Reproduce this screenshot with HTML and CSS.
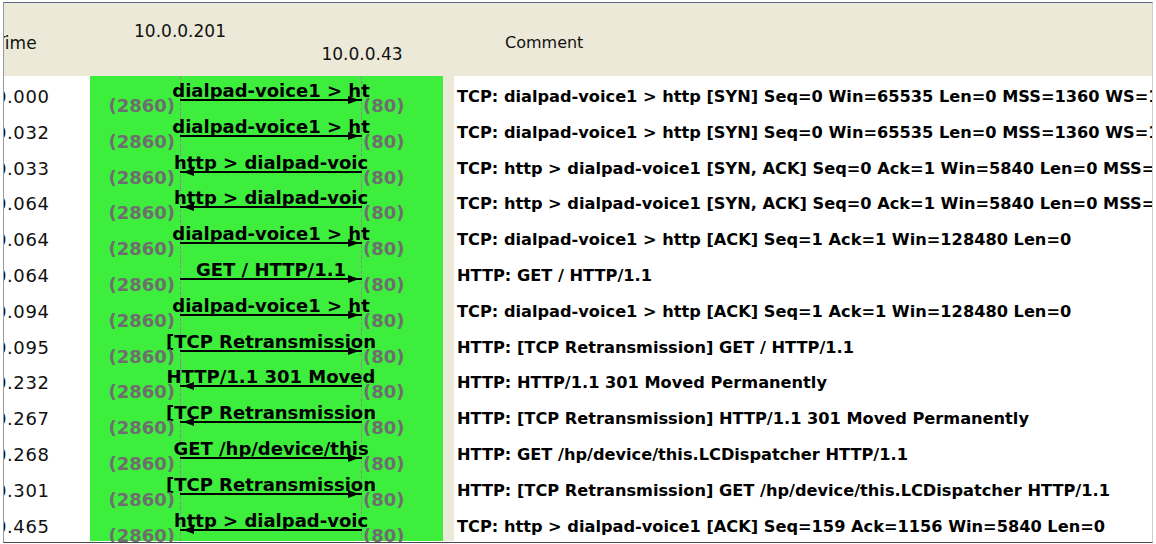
FILE: index.html
```html
<!DOCTYPE html>
<html>
<head>
<meta charset="utf-8">
<link rel="stylesheet" href="styles.css">
</head>
<body>
<div class="frame">
  <div class="header">
    <div class="h-time">Time</div>
    <div class="h-flow">
      <div class="node node-a">10.0.0.201</div>
      <div class="node node-b">10.0.0.43</div>
    </div>
    <div class="h-gap"></div>
    <div class="h-comment">Comment</div>
  </div>
  <div class="rows">
    <div class="row">
      <div class="time">0.000</div>
      <div class="flow"><div class="life"></div><div class="label">dialpad-voice1 &gt; ht</div><div class="arrow right"></div><div class="port src">(2860)</div><div class="port dst">(80)</div></div>
      <div class="gap"></div>
      <div class="comment">TCP: dialpad-voice1 &gt; http [SYN] Seq=0 Win=65535 Len=0 MSS=1360 WS=1</div>
    </div>
    <div class="row">
      <div class="time">0.032</div>
      <div class="flow"><div class="life"></div><div class="label">dialpad-voice1 &gt; ht</div><div class="arrow right"></div><div class="port src">(2860)</div><div class="port dst">(80)</div></div>
      <div class="gap"></div>
      <div class="comment">TCP: dialpad-voice1 &gt; http [SYN] Seq=0 Win=65535 Len=0 MSS=1360 WS=1</div>
    </div>
    <div class="row">
      <div class="time">0.033</div>
      <div class="flow"><div class="life"></div><div class="label">http &gt; dialpad-voic</div><div class="arrow left"></div><div class="port src">(2860)</div><div class="port dst">(80)</div></div>
      <div class="gap"></div>
      <div class="comment">TCP: http &gt; dialpad-voice1 [SYN, ACK] Seq=0 Ack=1 Win=5840 Len=0 MSS=1460</div>
    </div>
    <div class="row">
      <div class="time">0.064</div>
      <div class="flow"><div class="life"></div><div class="label">http &gt; dialpad-voic</div><div class="arrow left"></div><div class="port src">(2860)</div><div class="port dst">(80)</div></div>
      <div class="gap"></div>
      <div class="comment">TCP: http &gt; dialpad-voice1 [SYN, ACK] Seq=0 Ack=1 Win=5840 Len=0 MSS=1460</div>
    </div>
    <div class="row">
      <div class="time">0.064</div>
      <div class="flow"><div class="life"></div><div class="label">dialpad-voice1 &gt; ht</div><div class="arrow right"></div><div class="port src">(2860)</div><div class="port dst">(80)</div></div>
      <div class="gap"></div>
      <div class="comment">TCP: dialpad-voice1 &gt; http [ACK] Seq=1 Ack=1 Win=128480 Len=0</div>
    </div>
    <div class="row">
      <div class="time">0.064</div>
      <div class="flow"><div class="life"></div><div class="label">GET / HTTP/1.1</div><div class="arrow right"></div><div class="port src">(2860)</div><div class="port dst">(80)</div></div>
      <div class="gap"></div>
      <div class="comment">HTTP: GET / HTTP/1.1</div>
    </div>
    <div class="row">
      <div class="time">0.094</div>
      <div class="flow"><div class="life"></div><div class="label">dialpad-voice1 &gt; ht</div><div class="arrow right"></div><div class="port src">(2860)</div><div class="port dst">(80)</div></div>
      <div class="gap"></div>
      <div class="comment">TCP: dialpad-voice1 &gt; http [ACK] Seq=1 Ack=1 Win=128480 Len=0</div>
    </div>
    <div class="row">
      <div class="time">0.095</div>
      <div class="flow"><div class="life"></div><div class="label">[TCP Retransmission</div><div class="arrow right"></div><div class="port src">(2860)</div><div class="port dst">(80)</div></div>
      <div class="gap"></div>
      <div class="comment">HTTP: [TCP Retransmission] GET / HTTP/1.1</div>
    </div>
    <div class="row">
      <div class="time">0.232</div>
      <div class="flow"><div class="life"></div><div class="label">HTTP/1.1 301 Moved</div><div class="arrow left"></div><div class="port src">(2860)</div><div class="port dst">(80)</div></div>
      <div class="gap"></div>
      <div class="comment">HTTP: HTTP/1.1 301 Moved Permanently</div>
    </div>
    <div class="row">
      <div class="time">0.267</div>
      <div class="flow"><div class="life"></div><div class="label">[TCP Retransmission</div><div class="arrow left"></div><div class="port src">(2860)</div><div class="port dst">(80)</div></div>
      <div class="gap"></div>
      <div class="comment">HTTP: [TCP Retransmission] HTTP/1.1 301 Moved Permanently</div>
    </div>
    <div class="row">
      <div class="time">0.268</div>
      <div class="flow"><div class="life"></div><div class="label">GET /hp/device/this</div><div class="arrow right"></div><div class="port src">(2860)</div><div class="port dst">(80)</div></div>
      <div class="gap"></div>
      <div class="comment">HTTP: GET /hp/device/this.LCDispatcher HTTP/1.1</div>
    </div>
    <div class="row">
      <div class="time">0.301</div>
      <div class="flow"><div class="life"></div><div class="label">[TCP Retransmission</div><div class="arrow right"></div><div class="port src">(2860)</div><div class="port dst">(80)</div></div>
      <div class="gap"></div>
      <div class="comment">HTTP: [TCP Retransmission] GET /hp/device/this.LCDispatcher HTTP/1.1</div>
    </div>
    <div class="row">
      <div class="time">0.465</div>
      <div class="flow"><div class="life"></div><div class="label">http &gt; dialpad-voic</div><div class="arrow left"></div><div class="port src">(2860)</div><div class="port dst">(80)</div></div>
      <div class="gap"></div>
      <div class="comment">TCP: http &gt; dialpad-voice1 [ACK] Seq=159 Ack=1156 Win=5840 Len=0</div>
    </div>
  </div>
</div>
</body>
</html>
```
FILE: styles.css
```css
html, body {
  margin: 0;
  padding: 0;
  background: #ffffff;
}

body {
  font-family: "DejaVu Sans", Verdana, sans-serif;
  color: #000;
}

.frame {
  margin: 2px 0 0 3px;
  width: 1150px;
  height: 541px;
  box-sizing: border-box;
  border: 1px solid;
  border-color: #5b6a88 #cfcfcf #4a4a4a #9a9a9a;
  overflow: hidden;
  background: #fff;
}

.header {
  height: 73px;
  display: grid;
  grid-template-columns: 86px 353px 11px 1fr;
  background: #ece9d8;
  font-size: 16px;
  line-height: 20px;
  color: #111;
}

.h-time {
  padding-top: 30px;
  font-size: 17px;
  text-indent: -9px;
  white-space: nowrap;
}

.h-flow {
  display: grid;
  grid-template-columns: 180px 184px;
  grid-template-rows: 20px 20px;
  row-gap: 3px;
  padding-top: 18px;
  font-size: 17px;
}

.node {
  text-align: center;
  white-space: nowrap;
}

.node-a {
  grid-column: 1;
  grid-row: 1;
}

.node-b {
  grid-column: 2;
  grid-row: 2;
}

.h-comment {
  padding: 30px 0 0 51px;
}

.rows {
  display: grid;
  grid-auto-rows: 35.8px;
  background: linear-gradient(to right,
    #ffffff 0 86px,
    #3dee3d 86px 439px,
    #ece9d8 439px 450px,
    #ffffff 450px);
}

.row {
  display: grid;
  grid-template-columns: 86px 353px 11px 1fr;
  min-height: 0;
}

.time {
  font-size: 18px;
  letter-spacing: 0.6px;
  line-height: 20px;
  padding-top: 11px;
  text-indent: -9px;
  white-space: nowrap;
  color: #111;
}

.flow {
  display: grid;
  grid-template-columns: 90px 182px 1fr;
  grid-template-rows: 23px 1fr;
  font-weight: bold;
  font-size: 18px;
  line-height: 20px;
  min-height: 0;
}

.life {
  grid-column: 2;
  grid-row: 1 / 3;
  border-left: 1px dashed #8c8c8c;
  border-right: 1px dashed #8c8c8c;
}

.label {
  grid-column: 2;
  grid-row: 1;
  margin: 0 -40px;
  padding-top: 5px;
  text-align: center;
  white-space: nowrap;
  color: #000;
}

.arrow {
  grid-column: 2;
  grid-row: 2;
  align-self: start;
  height: 2px;
  background: #000;
  position: relative;
}

.arrow::after {
  content: "";
  position: absolute;
  top: -3px;
  width: 0;
  height: 0;
  border-top: 4px solid transparent;
  border-bottom: 4px solid transparent;
}

.arrow.right::after {
  right: 3px;
  border-left: 11px solid #000;
}

.arrow.left::after {
  left: 3px;
  border-right: 11px solid #000;
}

.port {
  grid-row: 2;
  margin-top: -3px;
  color: #6e6e6e;
  white-space: nowrap;
}

.port.src {
  grid-column: 1;
  justify-self: end;
  margin-right: 5px;
}

.port.dst {
  grid-column: 3;
  margin-left: 1px;
}

.comment {
  font-weight: bold;
  font-size: 16.2px;
  line-height: 20px;
  padding: 11px 0 0 3px;
  white-space: nowrap;
  overflow: hidden;
}
```
